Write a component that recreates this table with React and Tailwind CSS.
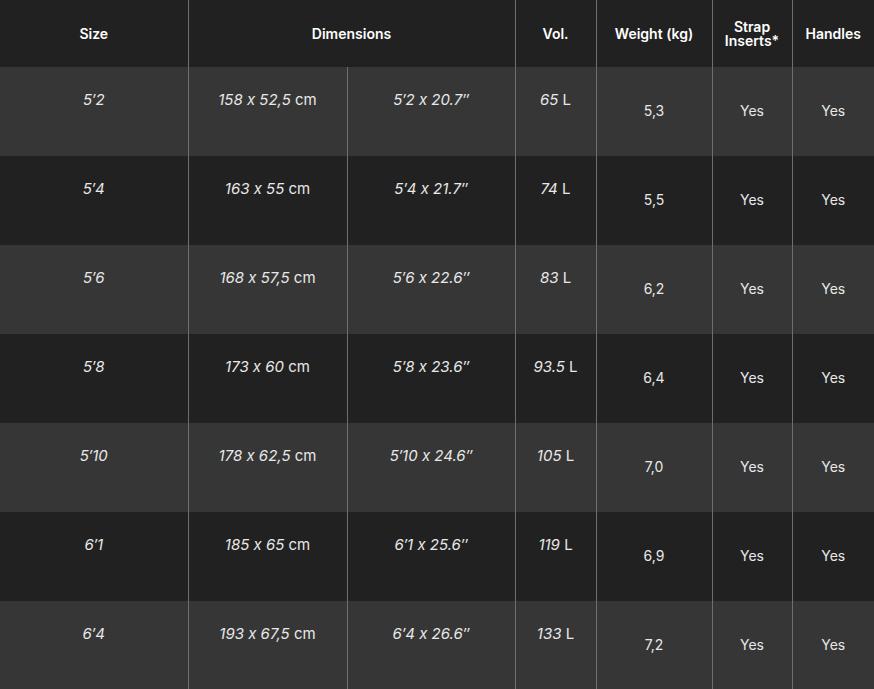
import React from "react";

const rows = [
  ["5′2", "158 x 52,5", "5′2 x 20.7′′", "65", "5,3"],
  ["5′4", "163 x 55", "5′4 x 21.7′′", "74", "5,5"],
  ["5′6", "168 x 57,5", "5′6 x 22.6′′", "83", "6,2"],
  ["5′8", "173 x 60", "5′8 x 23.6′′", "93.5", "6,4"],
  ["5′10", "178 x 62,5", "5′10 x 24.6′′", "105", "7,0"],
  ["6′1", "185 x 65", "6′1 x 25.6′′", "119", "6,9"],
  ["6′4", "193 x 67,5", "6′4 x 26.6′′", "133", "7,2"],
];

export default function App() {
  const font = { fontFamily: "Inter, 'Noto Sans', sans-serif" };
  const topCell = "align-top pt-[24px] text-[15px] leading-[18px] italic text-[#e8e8e8] text-center";
  const midCell = "align-middle pb-[1px] text-[14px] leading-[18px] text-[#e8e8e8] text-center";
  return (
    <div className="w-[874px] h-[689px] bg-[#212121] overflow-hidden [font-feature-settings:'calt'_0]" style={font}>
      <table className="w-[874px] table-fixed border-collapse">
        <colgroup>
          <col className="w-[188px]" />
          <col className="w-[159px]" />
          <col className="w-[168px]" />
          <col className="w-[81px]" />
          <col className="w-[116px]" />
          <col className="w-[80px]" />
          <col className="w-[82px]" />
        </colgroup>
        <thead>
          <tr className="h-[67px] bg-[#212121] text-white text-[14px] font-semibold">
            <th className="text-center align-middle font-semibold">Size</th>
            <th colSpan={2} className="text-center align-middle font-semibold border-l border-[#6e6e6e]">Dimensions</th>
            <th className="text-center align-middle font-semibold border-l border-[#6e6e6e]">Vol.</th>
            <th className="text-center align-middle font-semibold border-l border-[#6e6e6e]">Weight (kg)</th>
            <th className="text-center align-middle font-semibold border-l border-[#6e6e6e]">
              <div className="leading-[14px]">Strap</div>
              <div className="leading-[14px]">Inserts*</div>
            </th>
            <th className="text-center align-middle font-semibold border-l border-[#6e6e6e]">Handles</th>
          </tr>
        </thead>
        <tbody>
          {rows.map((r, i) => (
            <tr key={i} className={`h-[89px] ${i % 2 === 0 ? "bg-[#363636]" : "bg-[#212121]"}`}>
              <td className={topCell}>{r[0]}</td>
              <td className={`${topCell} border-l border-[#6e6e6e]`}>
                {r[1]} <span className="not-italic">cm</span>
              </td>
              <td className={`${topCell} border-l border-[#6e6e6e]`}>{r[2]}</td>
              <td className={`${topCell} border-l border-[#6e6e6e]`}>
                {r[3]} <span className="not-italic">L</span>
              </td>
              <td className={`${midCell} border-l border-[#6e6e6e]`}>{r[4]}</td>
              <td className={`${midCell} border-l border-[#6e6e6e]`}>Yes</td>
              <td className={`${midCell} border-l border-[#6e6e6e]`}>Yes</td>
            </tr>
          ))}
        </tbody>
      </table>
    </div>
  );
}
